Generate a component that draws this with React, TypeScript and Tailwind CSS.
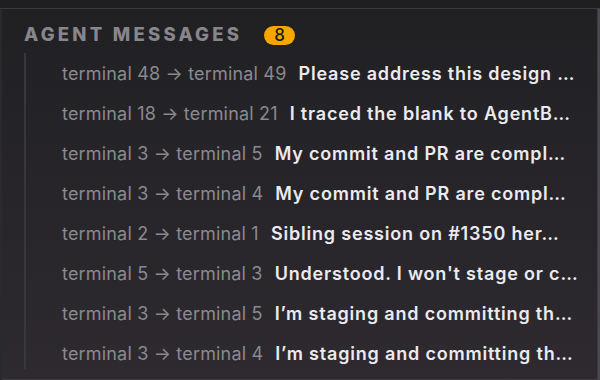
import React from "react";

const rows = [
  { from: "terminal 48", to: "terminal 49", msg: "Please address this design …" },
  { from: "terminal 18", to: "terminal 21", msg: "I traced the blank to AgentB…" },
  { from: "terminal 3", to: "terminal 5", msg: "My commit and PR are compl…" },
  { from: "terminal 3", to: "terminal 4", msg: "My commit and PR are compl…" },
  { from: "terminal 2", to: "terminal 1", msg: "Sibling session on #1350 her…" },
  { from: "terminal 5", to: "terminal 3", msg: "Understood. I won't stage or c…" },
  { from: "terminal 3", to: "terminal 5", msg: "I’m staging and committing th…" },
  { from: "terminal 3", to: "terminal 4", msg: "I’m staging and committing th…" },
];

export default function App() {
  return (
    <div
      className="w-[600px] h-[380px] overflow-hidden bg-[#1e1e21] flex flex-col"
      style={{ fontFamily: "Inter, 'Noto Sans', sans-serif" }}
    >
      <div className="h-[8px] shrink-0 bg-[#1f1f22]" />
      <div className="flex-1 flex border-t border-[#3a3a3e] bg-gradient-to-b from-[#202023] to-[#2e2a30]">
        <div className="w-[2px] bg-[#2a2a2d]" />
        <div className="flex-1 flex flex-col border-r border-[#3c3b40] border-b min-w-0">
          <div className="flex items-center h-[36px] mt-[8px] pl-[22px] gap-[25px]">
            <span className="text-[18.5px] font-extrabold tracking-[0.175em] -mr-[3px] text-[#86868b] uppercase">
              Agent Messages
            </span>
            <span className="h-[19px] px-[10px] rounded-full bg-[#f5a700] text-[#1a1a1a] text-[17px] leading-[19px] font-medium">
              8
            </span>
          </div>
          <div className="ml-[22px] border-l-2 border-[#38373c] h-[316px] flex flex-col">
            {rows.map((r, i) => (
              <div key={i} className="h-[40px] shrink-0 flex items-center pl-[36px] pr-[14px] whitespace-nowrap min-w-0">
                <span className="text-[#8a898e] text-[18px] tracking-[0.01em] shrink-0">
                  {r.from} → {r.to}
                </span>
                <span className="ml-[12px] text-[#ebeaee] text-[18px] tracking-[0.045em] font-semibold truncate">
                  {r.msg}
                </span>
              </div>
            ))}
          </div>
        </div>
        <div className="w-[2px] bg-[#4a4950]" />
      </div>
    </div>
  );
}
